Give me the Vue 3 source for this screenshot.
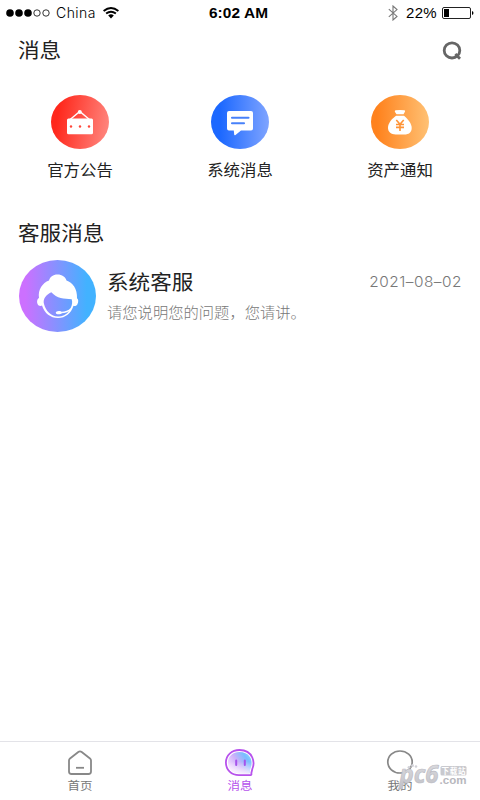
<script setup>
const shortcuts = [
  { key: 'notice', label: '官方公告' },
  { key: 'system', label: '系统消息' },
  { key: 'asset', label: '资产通知' },
]
</script>

<template>
  <main class="screen">
    <header class="status">
      <div class="side">
        <svg class="signal" width="44" height="10" viewBox="0 0 44 10">
          <circle cx="4" cy="5" r="3.8" /><circle cx="13" cy="5" r="3.8" /><circle cx="22" cy="5" r="3.8" />
          <circle class="hollow" cx="31" cy="5" r="3.2" /><circle class="hollow" cx="40" cy="5" r="3.2" />
        </svg>
        <span class="carrier">China</span>
        <svg class="wifi" width="16" height="12" viewBox="0 0 16 12">
          <path d="M.6 4Q8-2 15.4 4M3.1 6.6Q8 2.7 12.9 6.6" fill="none" stroke="#000" stroke-width="1.9" />
          <path d="M5.2 8.4Q8 6.2 10.8 8.4L8 11.4Z" />
        </svg>
      </div>
      <strong class="time">6:02 AM</strong>
      <div class="side right">
        <svg class="bluetooth" width="10" height="16" viewBox="0 0 10 16">
          <path d="M.8 4.2L9 11.4 5 15V1L9 4.6.8 11.8" fill="none" stroke="#777" stroke-width="1.1" />
        </svg>
        <span class="percent">22%</span>
        <svg class="battery" width="32" height="12" viewBox="0 0 32 12">
          <rect x=".5" y=".5" width="28" height="11" rx="1.5" fill="none" stroke="#222" />
          <rect x="2" y="2" width="5" height="8" /><path d="M30 4Q31.5 4.5 31.5 6T30 8Z" />
        </svg>
      </div>
    </header>

    <section class="titlebar">
      <h1>消息</h1>
      <svg width="20" height="20" viewBox="0 0 20 20" fill="none" stroke="#666" stroke-width="2.8">
        <ellipse cx="10" cy="9.4" rx="7.8" ry="7.6" /><path d="M13.3 13.1L18 17.8" />
      </svg>
    </section>

    <nav class="shortcuts">
      <a v-for="item in shortcuts" :key="item.key" class="shortcut">
        <span class="disc" :class="item.key">
          <svg v-if="item.key === 'notice'" width="58" height="54" viewBox="0 0 58 54">
            <path d="M18.5 25L28.8 16.5 39 25" fill="none" stroke="#fff" stroke-width="1.4" />
            <circle cx="28.8" cy="16.9" r="2" fill="#fff" />
            <rect x="16" y="23.5" width="26" height="15.7" rx="1.5" fill="#fff" />
            <g fill="#ff4539"><circle cx="20" cy="31.5" r="1.2" /><circle cx="29" cy="31.5" r="1.2" /><circle cx="38" cy="31.5" r="1.2" /></g>
          </svg>
          <svg v-else-if="item.key === 'system'" width="58" height="54" viewBox="0 0 58 54">
            <path d="M18 16H40Q42 16 42 18V33.5Q42 35.5 40 35.5H30L24.5 40Q23.3 40.6 23.2 39.5L22.8 35.5H18Q16 35.5 16 33.5V18Q16 16 18 16Z" fill="#fff" />
            <path d="M21 22.8H37.5M21 28.3H33" stroke="#4781fa" stroke-width="2.1" stroke-linecap="round" />
          </svg>
          <svg v-else width="58" height="54" viewBox="0 0 58 54">
            <path d="M24.5 15.2Q29 14.8 33.5 15.2 34.7 15.7 33.8 17L32.5 19.2H25.5L24 17Q23.3 15.7 24.5 15.2Z" fill="#fff" />
            <path d="M25 20.7H33C37 24 40.7 28.5 40.7 33 40.7 37.5 37.5 39.5 33.5 39.5H24.5C20.3 39.5 17 37.3 17 32.8 17 28 21 23.5 25 20.7Z" fill="#fff" />
            <path d="M25.3 25L29 29.2 32.7 25M25 29.5H33M25 32.4H33M29 29V36" fill="none" stroke="#ff9437" stroke-width="1.6" />
          </svg>
        </span>
        <span class="shortcut-label">{{ item.label }}</span>
      </a>
    </nav>

    <h2>客服消息</h2>
    <article class="conversation">
      <span class="avatar">
        <svg width="77" height="72" viewBox="0 0 77 72">
          <path d="M20 38C17.7 39 17.5 43 19.3 45.3 21 46.5 22.5 46 23 45.5 25.5 53.3 31.5 58 39 58 46.5 58 52 53.5 54.5 45.8 55.5 46.3 57.3 46 58.3 44.5 59.7 42 59.5 39.3 58 38.3 58.5 29 53.5 22.3 47.5 20.5 46.5 17 43 14.5 38.5 14.5 34 14.5 31 17 30 20.5 23.5 23 18.7 29.5 20 38Z" fill="#fff" />
          <path d="M25 44C23.6 39 27 34.7 32.3 32.2 38 38.5 45 38.8 52.7 39.2 53.6 42 53.2 45 51.7 48 49.5 50.8 46 51.6 42.5 51.8 42 50.8 40.5 51 38.5 51.3 36 51.8 36.5 54 38.5 54.2 40.5 54.4 42.4 54 42.8 53.2 46 53 48.8 52 50.4 50.7 47 55 42.5 56.7 39 56.5 32 56.2 26.7 51 25 44Z" fill="url(#face)" />
          <defs><linearGradient id="face"><stop stop-color="#9d86ff" /><stop offset="1" stop-color="#60a2ff" /></linearGradient></defs>
        </svg>
      </span>
      <div class="message">
        <div class="message-head"><h3>系统客服</h3><time>2021–08–02</time></div>
        <p>请您说明您的问题，您请讲。</p>
      </div>
    </article>

    <footer class="tabs">
      <a class="tab">
        <svg width="30" height="28" viewBox="0 0 30 28" fill="none" stroke="#888" stroke-width="1.8">
          <path d="M4 11.5Q4 10.3 5 9.5L13.3 3Q15 1.7 16.7 3L25 9.5Q26 10.3 26 11.5V22.5Q26 25 23.5 25H6.5Q4 25 4 22.5Z" /><path d="M11 18.8H19" />
        </svg>
        <span>首页</span>
      </a>
      <a class="tab active">
        <svg width="30" height="28" viewBox="0 0 30 28">
          <defs><linearGradient id="bubble" x1="0" y1=".8" x2="1" y2=".2"><stop offset=".1" stop-color="#f0d9ff" /><stop offset=".45" stop-color="#cdb0fa" /><stop offset=".8" stop-color="#79bdff" /><stop offset="1" stop-color="#8bd5ff" /></linearGradient><linearGradient id="glow" x1="0" y1="0" x2="0" y2="1"><stop offset=".45" stop-color="#fff" stop-opacity="0" /><stop offset="1" stop-color="#fff" stop-opacity=".75" /></linearGradient></defs>
          <path d="M27.3 20C29 16 28.9 12 27.3 8.5 25 3.5 20.5 1 14.5 1 6.5 1 .9 6.3 .9 13.5 .9 21 6.5 26.2 14 26.2H24.8Q27 26.2 26.3 24.2Z" fill="#fff" stroke="#b752ec" stroke-width="1.8" />
          <path d="M25.2 20C27.3 15.5 27 10.8 24.7 7.7 22.5 4.5 19 3 14.5 3 7.5 3 3 7.5 3 13.5S7.5 24.3 14.5 24.3H24.5Z" fill="url(#bubble)" />
          <path d="M25.2 20C27.3 15.5 27 10.8 24.7 7.7 22.5 4.5 19 3 14.5 3 7.5 3 3 7.5 3 13.5S7.5 24.3 14.5 24.3H24.5Z" fill="url(#glow)" />
          <path d="M11.2 11.5V16M19.8 11.5V16" stroke="#a653ec" stroke-width="2" stroke-linecap="round" />
        </svg>
        <span>消息</span>
      </a>
      <a class="tab">
        <svg width="30" height="28" viewBox="0 0 30 28" fill="none" stroke="#888" stroke-width="1.7">
          <ellipse cx="15" cy="13" rx="12.2" ry="11" />
        </svg>
        <span>我的</span>
      </a>
      <svg class="watermark" width="74" height="34" viewBox="0 0 74 34">
        <defs><linearGradient id="silver" x1="0" y1="0" x2="0" y2="1"><stop stop-color="#e2e2e6" /><stop offset="1" stop-color="#c0c0c6" /></linearGradient></defs>
        <g fill="#d2d2d8"><circle cx="11" cy="7.3" r="1.4" /><circle cx="14.5" cy="5.6" r="1.5" /><circle cx="18" cy="6.5" r="1.3" /></g>
        <text class="brand" x="1.5" y="22.5" textLength="39" lengthAdjust="spacingAndGlyphs">pc6</text>
        <rect x="42.5" y="6" width="26" height="9.5" rx="1.5" fill="#c9c9ce" />
        <text class="tag" x="43.5" y="13.7" textLength="24">下载站</text>
        <text class="domain" x="41.5" y="24.3" textLength="27" lengthAdjust="spacingAndGlyphs">.com</text>
      </svg>
    </footer>
  </main>
</template>

<style>
body { margin: 0; background: #fff; }
</style>

<style scoped>
* { box-sizing: border-box; }
.screen { width: 480px; height: 800px; display: flex; flex-direction: column; background: #fff; color: #222; font-family: "Noto Sans CJK SC", sans-serif; overflow: hidden; }
svg { display: block; flex: none; }
h1, h2, h3, p { margin: 0; font-weight: 400; }
h1, h2, h3, p, time, .shortcut-label, .tab span { transform: scaleY(.94); white-space: nowrap; }
.status { height: 25px; display: grid; grid-template-columns: 1fr auto 1fr; align-items: center; padding: 0 6px; font-family: Inter, "Liberation Sans", sans-serif; color: #000; }
.side { display: flex; align-items: center; }
.right { justify-content: flex-end; }
.hollow { fill: none; stroke: #000; stroke-width: .8; }
.carrier { font-size: 14px; font-weight: 300; letter-spacing: .45px; margin: 0 7px 0 6px; }
.time { font: 700 15.4px "Liberation Sans", sans-serif; letter-spacing: .1px; padding-right: 3px; }
.bluetooth { margin-right: 8px; }
.percent { font: 15px "Liberation Sans", sans-serif; letter-spacing: .3px; margin-right: 5px; }
.titlebar { height: 51px; display: flex; align-items: center; justify-content: space-between; padding: 0 18px; }
h1, h2, h3 { font-size: 21.6px; line-height: 32px; }
.titlebar h1 { margin-top: -1px; }
.shortcuts { height: 134px; display: grid; grid-template-columns: repeat(3, 160px); padding-top: 19px; }
.shortcut { display: flex; flex-direction: column; align-items: center; gap: 7.5px; }
.disc { width: 58px; height: 54px; border-radius: 50%; }
.notice { background: linear-gradient(100deg, #ff281c 15%, #ff8c84); }
.system { background: linear-gradient(90deg, #1c68ff 15%, #7fa4ff); }
.asset { background: linear-gradient(90deg, #ff821d 10%, #ffc174); }
.shortcut-label { font-size: 16.4px; line-height: 25px; }
h2 { height: 47px; padding: 7px 18px 0; }
.conversation { display: flex; padding: 3px 18px 0 19px; gap: 11px; }
.avatar { width: 77px; height: 72px; border-radius: 50%; background: linear-gradient(90deg, #cc70ff 8%, #42b2ff 88%); }
.message { flex: 1; padding-top: 6px; }
.message-head { display: flex; justify-content: space-between; align-items: center; height: 32px; }
time { font: 300 15.4px/20px Inter, sans-serif; color: #777; letter-spacing: .5px; }
p { font-size: 15.3px; line-height: 24px; font-weight: 300; color: #777; margin-top: 1px; }
.tabs { position: relative; height: 59px; margin-top: auto; border-top: 1px solid #e3e3e8; display: grid; grid-template-columns: repeat(3, 160px); padding-top: 7px; }
.tab { display: flex; flex-direction: column; align-items: center; }
.tab span { font-size: 12.5px; line-height: 18px; margin-top: -1px; color: #777; }
.active span { color: #b653ec; }
.watermark { position: absolute; top: 18px; right: 8px; }
.brand { font: italic 700 25px "Open Sans", sans-serif; fill: url(#silver); stroke: #bcbcc4; stroke-width: .7; stroke-linejoin: round; }
.tag { font: 700 7.5px "Noto Sans CJK SC", sans-serif; fill: #fff; }
.domain { font: 700 11px "Liberation Sans", sans-serif; fill: #b8b8be; }
</style>
